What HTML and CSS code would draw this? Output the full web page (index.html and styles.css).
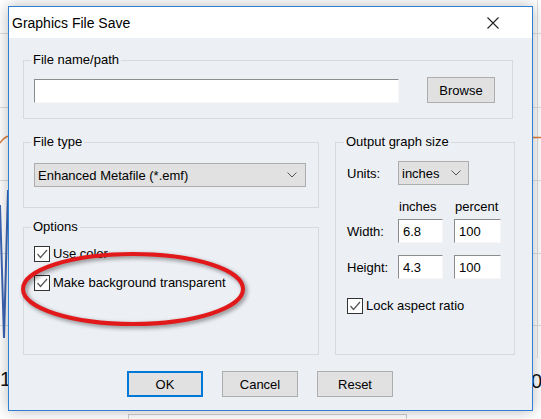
FILE: index.html
```html
<!DOCTYPE html>
<html lang="en">
<head>
  <meta charset="UTF-8">
  <title>Graphics File Save</title>
  <link rel="stylesheet" href="styles.css">
</head>
<body>

  <!-- chart window peeking out behind the dialog -->
  <svg class="backdrop" width="541" height="419" viewBox="0 0 541 419">
    <rect width="541" height="419" fill="#fff"/>
    <g stroke="#dedede" stroke-width="1">
      <line x1="0" y1="33.5" x2="541" y2="33.5"/>
      <line x1="0" y1="107.5" x2="541" y2="107.5"/>
      <line x1="0" y1="180.5" x2="541" y2="180.5"/>
      <line x1="0" y1="253.5" x2="541" y2="253.5"/>
      <line x1="0" y1="325.5" x2="541" y2="325.5"/>
      <line x1="537.5" y1="0" x2="537.5" y2="358"/>
    </g>
    <path d="M0 143 Q4 137 9 136" fill="none" stroke="#e07b39" stroke-width="1.5"/>
    <line x1="530" y1="137.5" x2="541" y2="137.5" stroke="#e07b39" stroke-width="1.5"/>
    <path d="M0 205 L4 338 L8 190" fill="none" stroke="#3c66b5" stroke-width="2"/>
    <text x="0" y="386" class="axis">1</text>
    <text x="531" y="388" class="axis">0(</text>
    <rect x="128.5" y="414.5" width="278" height="20" fill="#fff" stroke="#cfcfcf"/>
  </svg>

  <div class="dialog">
    <div class="titlebar">
      <span class="title">Graphics File Save</span>
      <svg class="close" width="12" height="12" viewBox="0 0 12 12">
        <path d="M0.5 0.5 L11.5 11.5 M11.5 0.5 L0.5 11.5" stroke="#222" stroke-width="1.1"/>
      </svg>
    </div>

    <div class="dialog-body">
      <fieldset class="group group-file">
        <legend>File name/path</legend>
        <div class="path-row">
          <input class="field field-path" type="text">
          <button class="btn btn-browse">Browse</button>
        </div>
      </fieldset>

      <div class="columns">
        <div class="col-left">
          <fieldset class="group group-type">
            <legend>File type</legend>
            <div class="combo combo-type">
              <span>Enhanced Metafile (*.emf)</span>
              <svg class="chevron" width="10" height="6" viewBox="0 0 10 6"><path d="M0.5 0.5 L5 5 L9.5 0.5" fill="none" stroke="#555"/></svg>
            </div>
          </fieldset>

          <fieldset class="group group-options">
            <legend>Options</legend>
            <label class="check">
              <span class="box"><svg width="14" height="14" viewBox="0 0 14 14"><path d="M2.5 7 L5.5 10.5 L12 3" fill="none" stroke="#555" stroke-width="1.2"/></svg></span>
              Use color
            </label>
            <label class="check">
              <span class="box"><svg width="14" height="14" viewBox="0 0 14 14"><path d="M2.5 7 L5.5 10.5 L12 3" fill="none" stroke="#555" stroke-width="1.2"/></svg></span>
              Make background transparent
            </label>
          </fieldset>
        </div>

        <fieldset class="group group-size">
          <legend>Output graph size</legend>
          <div class="size-row units-row">
            <span class="lbl">Units:</span>
            <div class="combo combo-units">
              <span>inches</span>
              <svg class="chevron" width="10" height="6" viewBox="0 0 10 6"><path d="M0.5 0.5 L5 5 L9.5 0.5" fill="none" stroke="#555"/></svg>
            </div>
          </div>
          <div class="size-row head-row">
            <span class="lbl"></span>
            <span class="col-head col-a">inches</span>
            <span class="col-head">percent</span>
          </div>
          <div class="size-row dim-row">
            <span class="lbl">Width:</span>
            <input class="field dim dim-a" type="text" value="6.8">
            <input class="field dim dim-b" type="text" value="100">
          </div>
          <div class="size-row dim-row dim-row-2">
            <span class="lbl">Height:</span>
            <input class="field dim dim-a" type="text" value="4.3">
            <input class="field dim dim-b" type="text" value="100">
          </div>
          <label class="check lock">
            <span class="box"><svg width="14" height="14" viewBox="0 0 14 14"><path d="M2.5 7 L5.5 10.5 L12 3" fill="none" stroke="#555" stroke-width="1.2"/></svg></span>
            Lock aspect ratio
          </label>
        </fieldset>
      </div>

      <div class="buttons">
        <button class="btn btn-default">OK</button>
        <button class="btn">Cancel</button>
        <button class="btn">Reset</button>
      </div>
    </div>
  </div>

  <!-- red marker drawn over the options box -->
  <svg class="annotation" width="541" height="419" viewBox="0 0 541 419">
    <ellipse cx="133" cy="289" rx="110" ry="35" fill="none" stroke="#e2191b" stroke-width="4"/>
  </svg>

</body>
</html>
```

FILE: styles.css
```css
html, body {
  margin: 0;
  padding: 0;
}
body {
  width: 541px;
  height: 419px;
  position: relative;
  overflow: hidden;
  background: #fff;
  font-family: "Liberation Sans", Arial, sans-serif;
  font-size: 13px;
  color: #000;
}

.backdrop {
  position: absolute;
  left: 0;
  top: 0;
}
.axis {
  font-family: "Liberation Sans", Arial, sans-serif;
  font-size: 20px;
  fill: #111;
}

.dialog {
  position: absolute;
  left: 8px;
  top: 6px;
  width: 525px;
  height: 405px;
  box-sizing: border-box;
  border: 1px solid #2f7fd4;
  background: #eceff4;
  box-shadow: 0 0 14px rgba(0, 0, 0, 0.28);
  display: flex;
  flex-direction: column;
}

.titlebar {
  height: 31px;
  background: #fff;
  display: flex;
  align-items: center;
  justify-content: space-between;
  padding: 0 33px 0 3px;
}
.title {
  font-size: 14px;
  color: #000;
}
.close {
  display: block;
}

.dialog-body {
  flex: 1;
  padding: 14px 0 0 14px;
}

/* group boxes */
.group {
  margin: 0;
  min-width: 0;
  border: 1px solid #d6d9dd;
  box-sizing: border-box;
}
.group legend {
  padding: 0 2px;
  margin-left: -3px;
  line-height: 16px;
}

.group-file {
  width: 490px;
  padding: 9px 17px 15px 10px;
}
.path-row {
  display: flex;
  align-items: center;
  gap: 28px;
  height: 26px;
}

.field {
  box-sizing: border-box;
  height: 24px;
  margin: 0;
  border: 1px solid #f6f6f6;
  border-top-color: #8c8c8c;
  border-left-color: #8c8c8c;
  background: #fff;
  font: inherit;
  padding: 0 4px;
  outline: none;
}
.field-path {
  width: 365px;
  margin-top: 2px;
}

.btn {
  box-sizing: border-box;
  height: 26px;
  width: 76px;
  margin: 0;
  padding: 0;
  border: 1px solid #adadad;
  background: #e1e1e1;
  font: inherit;
  color: #000;
}
.btn-browse {
  width: 68px;
}
.btn-default {
  border: 2px solid #0078d7;
}

.columns {
  margin-top: 15px;
  display: grid;
  grid-template-columns: 296px 180px;
  column-gap: 16px;
}
.col-left {
  display: flex;
  flex-direction: column;
}

.group-type {
  padding: 13px 12px 20px 10px;
}
.combo {
  box-sizing: border-box;
  height: 24px;
  border: 1px solid #adadad;
  background: #e1e1e1;
  display: flex;
  align-items: center;
  justify-content: space-between;
  padding: 0 8px 0 3px;
}
.combo-type {
  width: 272px;
}
.combo-units {
  width: 71px;
  padding-right: 7px;
}
.chevron {
  display: block;
}

.group-options {
  flex: 1;
  margin-top: 11px;
  padding: 11px 10px 10px 10px;
}

/* check boxes */
.check {
  display: flex;
  align-items: center;
  height: 16px;
  line-height: 16px;
}
.check + .check {
  margin-top: 13px;
}
.box {
  box-sizing: border-box;
  width: 16px;
  height: 16px;
  border: 1px solid #333;
  background: #fff;
  margin-right: 3px;
  display: flex;
  align-items: center;
  justify-content: center;
}
.box svg {
  display: block;
}

/* output size block */
.group-size {
  padding: 11px 10px 40px 11px;
}
.size-row {
  display: flex;
  align-items: center;
}
.lbl {
  width: 51px;
  flex: none;
}
.head-row {
  margin-top: 14px;
  line-height: 16px;
}
.col-head {
  padding-left: 1px;
}
.col-head.col-a {
  width: 55px;
}
.dim-row {
  margin-top: 4px;
}
.dim-row-2 {
  margin-top: 12px;
}
.dim {
  padding-left: 4px;
}
.dim-a {
  width: 45px;
  margin-right: 11px;
}
.dim-b {
  width: 47px;
}
.lock {
  margin-top: 19px;
}

.buttons {
  margin-top: 16px;
  padding-left: 104px;
  display: flex;
  gap: 19px;
}

.annotation {
  position: absolute;
  left: 0;
  top: 0;
  pointer-events: none;
  filter: drop-shadow(2px 2px 2px rgba(0, 0, 0, 0.45));
}
```
